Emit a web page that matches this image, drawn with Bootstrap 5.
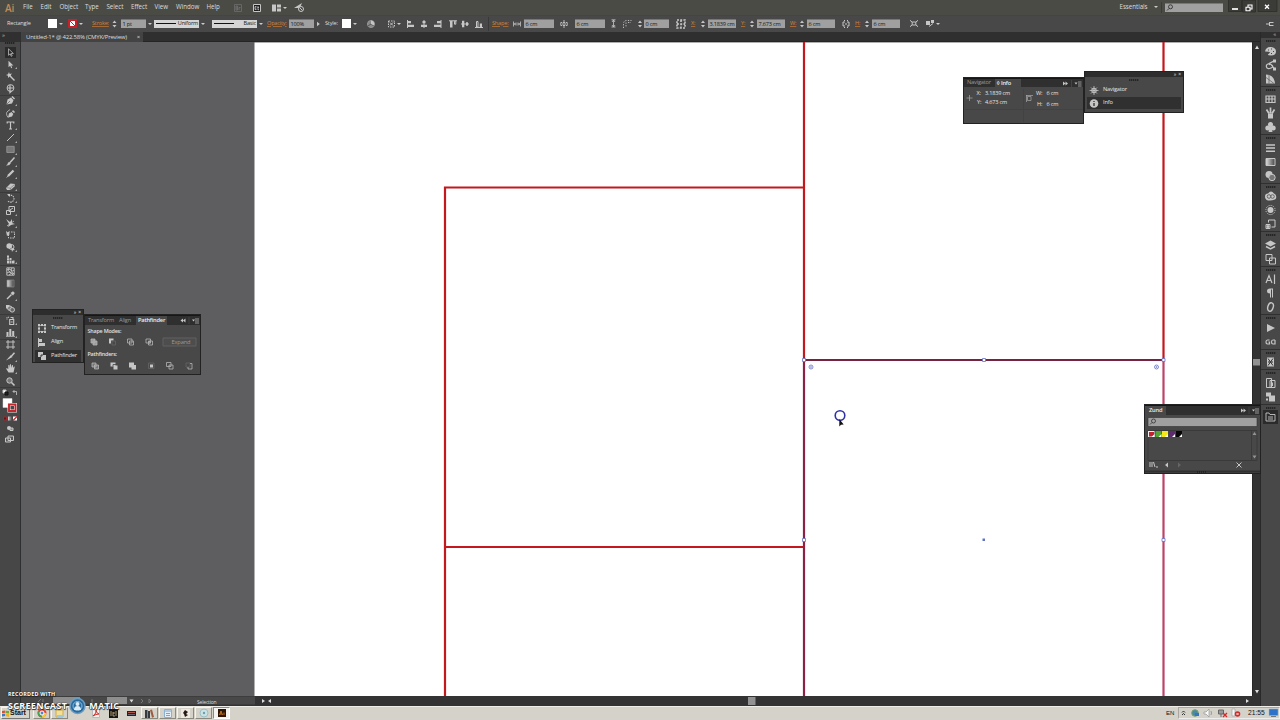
<!DOCTYPE html>
<html lang="en">
<head>
<meta charset="utf-8">
<title>Untitled-1</title>
<link href="https://cdn.jsdelivr.net/npm/bootstrap@5.3.0/dist/css/bootstrap.min.css" rel="stylesheet">
<style>
body{width:1280px;height:720px;overflow:hidden;background:#484848;color:#ddd;font:6px/1 "Open Sans","Noto Sans",sans-serif;letter-spacing:-.2px}
svg{display:block;overflow:visible;fill:none;stroke:#c6c6c6;stroke-width:1}
svg .f{fill:#c6c6c6;stroke:none}
.menubar{height:15px;background:#4b4b46;display:grid;align-items:center;grid-template-columns:18px 17.5px 19px 25.5px 21.5px 24.5px 23.5px 21.5px 30.5px 27px 19px 19px 22px 826px 41px 4px 65px 15px 18px 14px;padding-left:5px;font-size:6.2px;white-space:nowrap;flex:none;letter-spacing:-.03px}
.logo-ai{font-size:10px;color:#c58a55;font-weight:600}
.optbar{height:17px;background:#484848;border-top:1px solid #444;display:grid;align-items:center;padding-left:7px;padding-bottom:1px;white-space:nowrap;flex:none;font-size:5.6px;
grid-template-columns:41px 20px 24px 20px 42px 58px 55px 22px 36px 17px 25px 21px 19px 13px 14px 15px 12px 14px 13px 4px 21px 11px 36px 15px 36px 12px 15px 6px 32px 15px 9px 41px 8px 41px 9px 43px 13px 9px 46px 16px 340px 14px}
.lnk{color:#d58435;text-decoration:underline;text-decoration-color:#a46a36}
.fld{background:#a0a0a0;color:#161616;height:9px;line-height:8px;padding-left:1.5px;width:30px;border-top:1px solid #777;font-size:5.6px}
.search-fld{width:58px;height:8.5px}
.w25{width:25px}.w28{width:28px;margin-left:3px}
.dd::after{content:"";width:0;height:0;border:2px solid transparent;border-top:2.8px solid #ccc;border-bottom:0;margin-left:2px}
.sw{width:9px;height:9px;background:#fff}
.swr{border:2px solid #c62029;background:linear-gradient(45deg,#fff 42%,#c62029 43% 57%,#fff 58%)}
.spin{width:5px;flex:none}
.brush{width:45px;height:8px;background:#d4d4d4;color:#222;display:flex;align-items:center;font-size:5.6px;padding:0 1px 0 2px}
.brush::before{content:"";width:20px;border-top:1px solid #111;margin-right:auto}
.tabs{height:10px;background:#2f2f2f;flex:none;border-bottom:1px solid #252525}
.doctab{width:122px;height:10px;background:#434343;color:#ddd;padding-left:5px;font-size:6px;letter-spacing:-.22px;white-space:nowrap}
.doctab span{margin-left:auto;margin-right:3px}
.toolbox{width:21px;background:#484748;border-right:1.5px solid #2e2f30;flex:none}
.toolhead{height:9.5px;background:#303030;color:#bbb;font-size:6px;line-height:6px;padding-left:2px}
.dock .toolhead{height:5px;line-height:4px}
.grip{width:10px;height:2px;background:repeating-linear-gradient(90deg,#252525 0 1px,#3a3a3a 1px 2px);margin:0 auto}
.toolbox .grip{margin-bottom:2.5px}
.tool{height:12.2px;width:20px;display:flex;align-items:center;justify-content:center;position:relative}
.tool.sel svg{background:#2b2b2b;outline:1.5px solid #2b2b2b}
.tool.more::after{content:"";position:absolute;right:3px;bottom:1px;border:1px solid transparent;border-right-color:#aaa;border-bottom-color:#aaa}
.cut{box-shadow:inset 0 1px #3a3a3a}
.work{min-height:0;min-width:0}
.canvas{background:#5e5e60;flex:1 1 0;min-height:0}
.canvas>svg{overflow:hidden}
.vscroll{width:9px;background:#333;flex:none;border-left:1px solid #282828}
.statusrow{height:9.5px;background:#333;flex:none;font-size:5.7px;color:#ccc}
.dock{width:20px;background:#484848;border-left:1px solid #292929;flex:none}
.dgroup{border-top:1px solid #303030;padding-top:2px;position:relative}
.dgroup .grip{margin-bottom:1.5px}
.dgroup>svg{margin:0 auto;height:14px;width:11px;padding:1.5px 0}
.pnl{position:absolute;background:#484848;border:1px solid #222;font-size:5.7px;white-space:nowrap;color:#e4e4e4;z-index:3}
.p-info{left:963px;top:77px;width:121px;height:47px}
.p-nav{left:1084px;top:71px;width:100px;height:42px}
.p-tools{left:32px;top:309px;width:52px;height:54px}
.p-path{left:84px;top:314px;width:117px;height:61px}
.p-zund{left:1144px;top:404px;width:117px;height:70px}
.phead{background:#2d2d2d;height:5px;font-size:5px;line-height:4px;text-align:right;padding-right:2px}
.pnl .grip{margin-top:2px;margin-bottom:2.2px}
.ptabs{background:#2f2f2f;border-top:1px solid #171717;height:10px;color:#999;display:flex;align-items:center}
.ptabs b{background:#484848;color:#eee;font-weight:600;height:9px;line-height:8px;padding:0 2px}
.ptabs span{padding-left:3px}
.p-info .ptabs{height:9px}.p-info .ptabs b{height:8px;width:26px;padding-left:1.5px}
.t31{width:31px}.t21{width:20px}
.prow{height:14px;display:flex;align-items:center}
.prow.on{background:#303030;height:12px;margin:1px 2px}
.prow.on svg{margin-left:2px!important}
.p-nav .prow.on{margin-top:0}
.taskbar{height:14.5px;background:#d5d2c9;border-top:1px solid #f0eee8;flex:none;color:#111;display:grid;grid-template-columns:31px 2px 18px 18px 18px 18px 18px 18px 18px 18px 18px 18px 1fr 12px 102px;align-items:center;font-family:"Liberation Sans",sans-serif;letter-spacing:0}
.tbtn{width:17px;height:12px;display:flex;align-items:center;justify-content:center;border:1px solid #f6f4ee;border-right-color:#8b8880;border-bottom-color:#8b8880}
.flat{border-color:transparent}
.tbtn.active-app{background:#f5f3ef;border-color:#8b8880 #fff #fff #8b8880}
.startbtn{width:29px;height:12px;border:1px solid #f6f4ee;border-right-color:#777;border-bottom-color:#777;font:bold 7px/10px "Liberation Sans",sans-serif;margin-left:1px;gap:1px}
.tray{width:102px;height:12px;border:1px solid #aaa7a0;border-right-color:#eee;border-bottom-color:#eee;padding-left:2px}
.clock{font-size:6.7px;margin-left:-3px}
.wmark{position:absolute;left:8px;top:690.5px;z-index:9;color:#fff;font-family:"Open Sans",sans-serif;font-weight:700;text-shadow:.7px .7px 1px #222,-.5px 0 1px #333,0 0 1px #222;white-space:nowrap;line-height:1}
.wm1{font-size:5.4px;line-height:7px;letter-spacing:.22px}
.wm2{font-size:9px;letter-spacing:.3px;height:16px}
.wm2 svg{margin:0 3px 0 2px}
</style>
<script src="https://cdn.jsdelivr.net/npm/bootstrap@5.3.0/dist/js/bootstrap.bundle.min.js"></script>
</head>
<body class="d-flex flex-column position-relative">
<nav class="menubar">
 <span class="logo-ai">Ai</span><span>File</span><span>Edit</span><span>Object</span><span>Type</span><span>Select</span><span>Effect</span><span>View</span><span>Window</span><span>Help</span>
 <svg width="8" height="8"><path d="M.5.5h7v7h-7z" stroke="#666"/><path d="M2 2v4h1.500v-4H2M2 4h1.500M5 6V3.500h1.500" stroke="#6c6c6c"/></svg>
 <svg width="8" height="8"><path d="M.5.5h7v7h-7z" fill="#1c1c1c"/><path d="M3.500 2.500H2v3h1.500M2 4h1.500M5 2v4M4.500 3.500h1.500M5 5.700h1" stroke-width=".8"/></svg>
 <div class="dd d-flex align-items-center"><svg width="9" height="8"><path class="f" d="M0 .5h4v7H0zM5 .5h4v3H5zM5 4.500h4v3H5z"/></svg></div>
 <svg width="10" height="9"><path class="f" d="M0 5 8 0 5 7 4 5z"/><circle cx="7" cy="6" r="2.500" fill="#4b4b46"/><path d="M5.500 4.500l3 3"/></svg>
 <div class="dd d-flex align-items-center gap-1">Essentials</div>
 <svg width="1" height="11"><path d="M.5 0v11" stroke="#3a3a37"/></svg>
 <div class="fld search-fld"><svg width="8" height="7"><g stroke="#333" stroke-width=".9"><circle cx="4.500" cy="2.800" r="2"/><path d="M3 4.500 1 6.500"/></g></svg></div>
 <svg width="10" height="9"><path d="M-1.500-4h13V8.500h-13z" fill="#3b3b38" stroke="#2c2c2a" stroke-width=".8"/><path d="M2 6h6" stroke="#fff" stroke-width="1.700"/></svg>
 <svg width="8" height="8"><path d="M-2.500-4h13V8h-13z" fill="#3b3b38" stroke="#2c2c2a" stroke-width=".8"/><path d="M3 3V1h4v4H5.500M1 3.200h4v3.500H1z" stroke="#fff" stroke-width="1.100"/></svg>
 <svg width="8" height="7"><path d="M-5-4.500h19V7.500H-5z" fill="#3b3b38" stroke="#2c2c2a" stroke-width=".8"/><path d="M2 .7l4 4M6 .7l-4 4" stroke="#fff" stroke-width="1.300"/></svg>
</nav>
<div class="optbar">
 <span>Rectangle</span>
 <div class="dd d-flex align-items-center"><i class="sw"></i></div>
 <div class="dd d-flex align-items-center"><i class="sw swr"></i></div>
 <span class="lnk">Stroke:</span>
 <div class="d-flex align-items-center dd"><svg class="spin me-1" height="8"><path class="f" d="M.5 3 2.500.5 4.500 3zM.5 5 2.500 7.500 4.500 5z"/></svg><span class="fld w25">1 pt</span></div>
 <div class="dd d-flex align-items-center"><span class="brush">Uniform</span></div>
 <div class="dd d-flex align-items-center"><span class="brush">Basic</span></div>
 <span class="lnk">Opacity:</span>
 <div class="d-flex align-items-center"><span class="fld w25">100%</span><svg width="6" height="6"><path class="f" d="M3 .8 5.800 3 3 5.200z"/></svg></div>
 <span>Style:</span>
 <div class="dd d-flex align-items-center"><i class="sw"></i></div>
 <svg width="8" height="8"><circle cx="4" cy="4" r="3.500" fill="#888" stroke="#999"/><path d="M4 4l3 2M4 4 1 6" stroke="#555"/><path class="f" d="M4 4V.5Q8 1 7 5.500z"/></svg>
 <div class="dd d-flex align-items-center"><svg width="7" height="8"><path d="M.5 1h6v6h-6z" stroke-dasharray="1.500 1"/><path d="M2 2.500l3 3M5 2.500l-3 3"/></svg></div>
 <svg width="8" height="8"><path d="M.5 0v8"/><path class="f" d="M1 1h3v2.300H1zM1 4.700h6V7H1z"/></svg>
 <svg width="8" height="8"><path d="M4 0v8"/><path class="f" d="M2.500 1h3v2.300h-3zM1 4.700h6V7H1z"/></svg>
 <svg width="8" height="8"><path d="M7 0v8"/><path class="f" d="M3 1h4v2.300H3zM0 4.700h7V7H0z"/></svg>
 <svg width="8" height="8"><path d="M0 .8h8M5.500 1.200h1.300v3H5.500z"/><path class="f" d="M1 1h2.500v6.500H1z"/></svg>
 <svg width="8" height="8"><path d="M0 4h8"/><path class="f" d="M1 .7h2.300v6.600H1zM5 2.200h2v3.600H5z"/></svg>
 <svg width="8" height="8"><path d="M0 7.500h8M1.500 1.500h1.500v5.500H1.500z"/><path class="f" d="M4.800 3.500h2.200V7H4.800z"/></svg>
 <svg width="1" height="14"><path d="M.5 0v14" stroke="#383838"/></svg>
 <span class="lnk">Shape:</span>
 <svg width="8" height="8"><path d="M.5 1.500v5M7.500 1.500v5M1 4h6M3 2.500 1.500 4 3 5.500M5 2.500 6.500 4 5 5.500" stroke-width=".8"/></svg>
 <span class="fld">6 cm</span>
 <svg width="8" height="8"><path d="M3 2.500h2v3H3zM2 2.500H.8v3H2M6 2.500h1.200v3H6M4 0v2M4 6v2" stroke-width=".9"/></svg>
 <span class="fld">6 cm</span>
 <svg width="6" height="9"><path d="M.5.8h4M.5 8h4M2.500 1v7M1 3l1.500-2L4 3M1 6l1.500 2L4 6" stroke-width=".8"/></svg>
 <svg width="9" height="8"><path d="M.5 8V4Q.5.500 4 .5h4.500M3 2.500v5M5 2.500h3" stroke-dasharray="1.300 1.300" stroke-width=".9"/></svg>
 <svg class="spin" height="8"><path class="f" d="M0 3 2 .5 4 3zM0 5 2 7.500 4 5z"/></svg>
 <span class="fld w25">0 cm</span>
 <svg width="10" height="10"><path d="M1 1h8v8H1zM5 1v8M1 5h8" stroke-dasharray="2 1.200" stroke-width="1.600"/></svg>
 <span class="lnk">X:</span>
 <div class="d-flex align-items-center"><svg class="spin" height="8"><path class="f" d="M1 3 3 .5 5 3zM1 5 3 7.500 5 5z"/></svg><span class="fld w28">3.1839 cm</span></div>
 <span class="lnk">Y:</span>
 <div class="d-flex align-items-center"><svg class="spin" height="8"><path class="f" d="M1 3 3 .5 5 3zM1 5 3 7.500 5 5z"/></svg><span class="fld w28">7.673 cm</span></div>
 <span class="lnk">W:</span>
 <div class="d-flex align-items-center"><svg class="spin" height="8"><path class="f" d="M1 3 3 .5 5 3zM1 5 3 7.500 5 5z"/></svg><span class="fld w28">6 cm</span></div>
 <svg width="8" height="8"><path d="M3 2H1v4h2M5 2h2v4H5M3 4h2M2.500 0v1M5.500 0v1M2.500 7v1M5.500 7v1"/></svg>
 <span class="lnk">H:</span>
 <div class="d-flex align-items-center"><svg class="spin" height="8"><path class="f" d="M1 3 3 .5 5 3zM1 5 3 7.500 5 5z"/></svg><span class="fld w28">6 cm</span></div>
 <svg width="8" height="7"><path d="M2.200 2h3.600v3H2.200zM0 .3 2 2M8 .3 6 2M0 6.700 2 5M8 6.700 6 5"/></svg>
 <div class="dd d-flex align-items-center"><svg width="8" height="7"><path class="f" d="M0 1h4v4H0zM5 0h3v3H5z"/><path d="M3 6.500 7 3.500"/></svg></div>
 <svg width="8" height="6"><path d="M0 3h3M3.500 1v4M4 1.500h3.500M4 4.500h3.500"/></svg>
</div>
<main class="d-flex flex-grow-1 work">
 <aside class="toolbox">
  <div class="toolhead">»</div>
  <div class="grip"></div>
  <div class="tool sel"><svg width="9" height="9"><path d="M2.500.8v6.500l1.700-1.500 1 2.500 1-.5-1-2.300h2.200z" stroke="#bbb" stroke-width=".8"/></svg></div>
  <div class="tool more"><svg width="9" height="9"><path class="f" d="M2.500.8v6.500l1.700-1.500 1 2.500 1-.5-1-2.300h2.200z"/></svg></div>
  <div class="tool"><svg width="9" height="9"><path d="M4 4l4.500 4.500" stroke-width="1.400"/><path class="f" d="M3 0l.7 2L6 1.500 4.700 3.300 5.500 5 3.500 4.500 2 6 2 3.800 0 3l2-.8z"/></svg></div>
  <div class="tool"><svg width="9" height="9"><circle cx="4.500" cy="4" r="3.400"/><path d="M1.500 4h6M4 1v7.500l1.500-1.500" stroke-width="1.200"/></svg></div>
  <div class="tool more cut"><svg width="9" height="9"><path class="f" d="M.5 8.500 1.500 3.500 5 1.500 7.500 4.300 6 7.500zM5.500 1 6.500 0l2.500 2.500-1 1z"/><path d="M.5 8.500 4 5" stroke="#484848" stroke-width=".6"/></svg></div>
  <div class="tool"><svg width="9" height="9"><path class="f" d="M2 8.500 3 4.500 5.500 3 7.300 5 6 7.500zM6 2.500 7 1l2 2-1 1z"/><path d="M2 8.500Q-1 4 2 2T4 .5" stroke-width=".8"/></svg></div>
  <div class="tool more"><svg width="9" height="9"><path d="M1.200 2.500V1h6.600v1.500M4.500 1v7M3 8h3" stroke-width="1.200"/></svg></div>
  <div class="tool more"><svg width="9" height="9"><path d="M1 8 8 1"/></svg></div>
  <div class="tool more"><svg width="9" height="9"><path d="M.8 1.300h7.400v6.200H.8z" fill="#777" stroke="#999" stroke-width=".8"/></svg></div>
  <div class="tool more"><svg width="9" height="9"><path d="M8.500.5 4 5.500" stroke-width="1.500"/><path class="f" d="M0 8.500Q2 7.500 2 5.500L4 5l.7 1.500Q3.500 9 0 8.500z"/></svg></div>
  <div class="tool more"><svg width="9" height="9"><path d="M2 7 7.500 1.500" stroke-width="2.300"/><path d="M.7 8.500 2.500 6.700"/></svg></div>
  <div class="tool more"><svg width="9" height="9"><path class="f" d="M0 6 4.500 1.500 9 2 8.500 4.500 4.500 8H1z"/><path d="M1 5.700l3.300.5L8.500 2.500M4.300 6v2" stroke="#666" stroke-width=".6"/></svg></div>
  <div class="tool more cut"><svg width="9" height="9"><path d="M2.500 1.700A3.500 3.500 0 1 1 1.500 6.500" stroke-dasharray="1.500 .8" stroke-width="1.100"/><path class="f" d="M1 0h3v3z"/></svg></div>
  <div class="tool more"><svg width="9" height="9"><path d="M3 .5h5.500v5H3zM.5 4.500h4v4h-4z"/><path d="M4 4 7 2"/></svg></div>
  <div class="tool more"><svg width="9" height="9"><path class="f" d="M0 1l4 3L6 1v4l3 1-4 1-3 2 1-3z"/><path d="M1 8 8 3" stroke-width=".8"/></svg></div>
  <div class="tool"><svg width="9" height="9"><path d="M2.500 2h6v6h-6z" stroke-dasharray="1.500 1"/><path class="f" d="M0 1l4 3-3 2z"/></svg></div>
  <div class="tool more"><svg width="9" height="9"><circle class="f" cx="3.200" cy="3" r="2.800"/><circle cx="5.500" cy="4" r="2.500"/><path class="f" d="M5 4l4 3-2 .2L6 9z"/></svg></div>
  <div class="tool more"><svg width="9" height="9"><path class="f" d="M1 .5h2v8H1zM3.500 3h2v5.500h-2zM6 5.500h2.500v3H6z"/><path d="M1 3h3M1 5.500h6" stroke="#555" stroke-width=".6"/></svg></div>
  <div class="tool cut"><svg width="9" height="9"><path d="M.8.8h7.400v7.400H.8zM.8 3Q3 1 5 3t3 0M1 6q2-2 4 0t3 0M3 1Q1 4 4 5T3 8M6 1q-2 2 0 4t0 3" stroke-width=".9"/></svg></div>
  <div class="tool"><svg width="9" height="9"><defs><linearGradient id="gr"><stop stop-color="#ddd"/><stop offset="1" stop-color="#444"/></linearGradient></defs><path d="M1 1h7v7H1z" fill="url(#gr)" stroke="#888" stroke-width=".7"/></svg></div>
  <div class="tool more"><svg width="9" height="9"><path d="M1 8 5.500 3.500" stroke-width="1.400"/><path class="f" d="M4.500 2 7 .2 8.800 2 7 4.500z"/></svg></div>
  <div class="tool"><svg width="9" height="9"><path class="f" d="M0 1h3.500v3.500H0z"/><circle cx="3.800" cy="4.200" r="2.200" fill="#777"/><circle cx="6.200" cy="5.800" r="2.300" fill="#666"/></svg></div>
  <div class="tool more cut"><svg width="9" height="9"><path d="M3.700 3.500h4v5h-4zM4.500 1.500h2.500v2M1 1v.8M2.500.8v1M.5 3h1M4.800 6h1.800" stroke-width="1.100"/></svg></div>
  <div class="tool more"><svg width="9" height="9"><path class="f" d="M.5 4h2v4h-2zM3.300 1h2v7h-2zM6.200 3h2v5h-2z"/><path d="M0 8.500h9" stroke-width=".7"/></svg></div>
  <div class="tool cut"><svg width="9" height="9"><path d="M2 0v9M7 0v9M0 2h9M0 7h9" stroke-width=".9"/></svg></div>
  <div class="tool more"><svg width="9" height="9"><path class="f" d="M0 8.500 5 3l1.500 2z"/><path d="M5.500 4 8.500.8" stroke-width="1.500"/></svg></div>
  <div class="tool more"><svg width="9" height="9"><path class="f" d="M2.500 8.500 0 4.500l1-.3L2.300 5V1h1v3L4 .2h1V4l1-3 1 .2V4l1-1.500.8.300L7.500 8.500z"/></svg></div>
  <div class="tool"><svg width="9" height="9"><circle cx="3.500" cy="3.500" r="2.700" fill="#777"/><path d="M5.500 5.500l3 3" stroke-width="1.600"/></svg></div>
  <svg width="20" height="60" viewBox="0 0 20 60"><path d="M0 .5h20" stroke="#3a3a3a"/><path d="M3 3h3v3H3z" fill="#fff"/><path d="M5 5h3v3H5z" fill="#222" stroke="#111"/><path d="M13 4.500h3.500V8M14.500 3 13 4.500l1.500 1.500" stroke-width=".8"/>
   <path d="M3 11.500h9v9H3z" fill="#fff" stroke="#ddd" stroke-width=".5"/><path d="M9 17.500h6.500v6.500H9z" fill="#484848" stroke="#eee" stroke-width="3"/><path d="M9 17.500h6.500v6.500H9z" stroke="#c6242b" stroke-width="1.900"/>
   <path d="M3.500 30h3v3h-3z" stroke="#b21f24" fill="#571b1d"/><path d="M8 29.500h4v4H8z" fill="url(#gr)" stroke="none"/><path d="M13 29.500h4v4h-4z" fill="#fff" stroke="none"/><path d="M13 33.500l4-4" stroke="#c6242b" stroke-width="1.300"/>
   <circle cx="9" cy="41" r="2" class="f"/><path d="M10 41h3v2.500h-3z" fill="#888"/><path d="M5.500 51h5v4h-5zM8 49h5.500v4.500H8z" fill="#555"/></svg>
 </aside>
 <section class="d-flex flex-column flex-grow-1 work">
  <div class="tabs"><div class="doctab d-flex align-items-center">Untitled-1* @ 422.58% (CMYK/Preview)<span>×</span></div></div>
  <div class="d-flex flex-grow-1 work">
   <div class="canvas">
    <svg width="1231" height="654" viewBox="21 42 1231 654">
     <path d="M254.500 42.500H1252V696H254.500z" fill="#fff" stroke="none"/>
     <g stroke="#c4181f" stroke-width="2.200"><path d="M804 42v318M1163.500 42v318M445 696V187.500h359M445 547h359"/></g>
     <path d="M804 360v336" stroke="#8d2145" stroke-width="2.200"/><path d="M1163.500 360v336" stroke="#bd4468" stroke-width="2.200"/><path d="M804 360h359.500" stroke="#742343" stroke-width="2"/>
     <g fill="#fff" stroke="#6370c4" stroke-width=".8"><path d="M802.500 358.500h3v3h-3zM1162 358.500h3v3h-3zM982.500 358.500h3v3h-3zM802.500 538.500h3v3h-3zM1162 538.500h3v3h-3z"/><circle cx="811" cy="367" r="2"/><circle cx="1156.500" cy="367" r="2"/></g>
     <g fill="#6370c4" stroke="none"><circle cx="811" cy="367" r=".8"/><circle cx="1156.500" cy="367" r=".8"/><path d="M982.500 538.500h2.500v2.500h-2.500z"/></g>
     <circle cx="840" cy="415.500" r="4.800" stroke="#3030a8" stroke-width="1.600"/><path d="M839.300 419v7.500l1.700-1.700 2.700-.2z" fill="#111" stroke="none"/>
    </svg>
   </div>
   <div class="vscroll"><svg width="9" height="654"><path d="M2 7 4 3.500 6 7zM2 648h4l-2 3.500z" fill="#ddd" stroke="none"/><path d="M0 317h8v6.500H0z" fill="#929292" stroke="none"/></svg></div>
  </div>
  <div class="statusrow"><svg width="1239" height="9" viewBox="21 696 1239 9"><path d="M21 696.500h234v8H21z" fill="#484848" stroke="none"/><path d="M53 697h27v7H53zM107 697h20v7h-20z" fill="#8e8e8e" stroke="none"/><path d="M129.500 699.500h4l-2 3zM262 699l3 2-3 2zM271 699l-3 2 3 2zM1246 699l3 2-3 2z" fill="#ddd" stroke="none"/><path d="M38 702l3-3M43 699v3M92 699v4M141 699l2 2-2 2M149 699l2 2-2 2v-4" stroke="#777"/><path d="M748 697h7.500v8h-7.500z" fill="#929292" stroke="none"/><text x="197" y="703.500" fill="#ddd" stroke="none" textLength="19.500" lengthAdjust="spacingAndGlyphs">Selection</text></svg></div>
 </section>
 <aside class="dock">
  <div class="toolhead text-end pe-1">«</div>
  <div class="dgroup"><div class="grip"></div>
   <svg viewBox="0 0 11 11"><path class="f" d="M0 6Q1 1 6 1.500T11 6 6 10 4 8 0 6z"/><path d="M3 4.500h1M6 3.500h1M8 6h1M6 8h1" stroke="#444"/></svg>
   <svg viewBox="0 0 11 11"><path d="M10 1 4 4Q.7 5 1.500 7.500T6 8.500 6 5Q5 4 4 5.500M6 5l4 5" stroke-width="1.200"/><path class="f" d="M8 0h3v3H8zM8 8h3v3H8z"/></svg>
   <svg viewBox="0 0 11 11"><path class="f" d="M1 1Q9 1 10 10H1z"/><path d="M1 4l8 6M4 1.500V10" stroke="#666" stroke-width=".8"/></svg></div>
  <div class="dgroup"><div class="grip"></div>
   <svg viewBox="0 0 11 11"><path d="M1 2.500h9v6.500H1zM1 5.500h9M4 2.500V9M7 2.500V9" stroke-width="1.200"/></svg>
   <svg viewBox="0 0 11 11"><path class="f" d="M3 6h5v5H3z"/><path d="M4 6 1.500 2M5.500 6V0M7 6l2.500-4" stroke-width="1.700"/></svg>
   <svg viewBox="0 0 11 11"><circle class="f" cx="5.500" cy="3" r="2.500"/><circle class="f" cx="2.800" cy="6.500" r="2.500"/><circle class="f" cx="8.200" cy="6.500" r="2.500"/><path class="f" d="M5 5h1l1.500 5.500h-4z"/></svg></div>
  <div class="dgroup"><div class="grip"></div>
   <svg viewBox="0 0 11 11"><path d="M1 2.500h9M1 5.500h9M1 8.800h9" stroke-width="1.500"/></svg>
   <svg viewBox="0 0 11 11"><path d="M1 2h9v7H1z" fill="url(#gr)"/></svg>
   <svg viewBox="0 0 11 11"><circle class="f" cx="4" cy="4" r="3.500"/><circle cx="7" cy="7" r="3.200" fill="#777"/></svg></div>
  <div class="dgroup"><div class="grip"></div>
   <svg viewBox="0 0 11 11"><path class="f" d="M0 6Q0 3 3 3 6-1 9 3q3 1 2 5-1 2-8 2-3-1-3-4z"/><circle cx="4" cy="6" r="1.800" stroke="#666"/><circle cx="7.500" cy="6" r="1.800" stroke="#666"/></svg>
   <svg viewBox="0 0 11 11"><circle class="f" cx="5.500" cy="5.500" r="3"/><circle cx="5.500" cy="5.500" r="4.600" stroke-dasharray="1 1"/></svg>
   <svg viewBox="0 0 11 11"><path d="M3.500 4V1.500H10v7H6.500M1 6h4v4H1z"/><circle class="f" cx="3" cy="8" r="1.500"/></svg></div>
  <div class="dgroup"><div class="grip"></div>
   <svg viewBox="0 0 11 11"><path class="f" d="M0 4 5.500 1 11 4 5.500 7z"/><path d="M1 7l4.500 2.500L10 7" stroke-width="1.500"/></svg>
   <svg viewBox="0 0 11 11"><path d="M1 1h6v6H1zM4.500 4.500h6v6h-6z" fill="#484848"/></svg></div>
  <div class="dgroup"><div class="grip"></div>
   <svg viewBox="0 0 11 11"><path d="M1 9.500 4 2l3 7.500M2 7h4M9.500 1v9.500" stroke-width="1.200"/></svg>
   <svg viewBox="0 0 11 11"><path class="f" d="M8 1H5Q2 1 2 3.500T5 6v4h1V2h1v8h1z"/></svg>
   <svg viewBox="0 0 11 11"><ellipse cx="5.500" cy="5.500" rx="2.700" ry="4.300" transform="rotate(18 5.500 5.500)" stroke-width="1.400"/></svg></div>
  <div class="dgroup"><div class="grip"></div>
   <svg viewBox="0 0 11 11"><path class="f" d="M2 1.500 10 5.500 2 9.500z"/></svg>
   <svg viewBox="0 0 11 11"><path d="M4.500 3.500H2.500Q1 3.500 1 5.500t1.500 2h2V5.500H3.500M10 3.500H8Q6.500 3.500 6.500 5.500t1.500 2h2v-4" stroke-width="1.200"/></svg></div>
  <div class="dgroup"><div class="grip"></div>
   <svg viewBox="0 0 11 11"><path class="f" d="M2 1h7v9H2z"/><path d="M3 2l5 7M8 2 3 9M3 5.500h5" stroke="#333"/></svg></div>
  <div class="dgroup"><div class="grip"></div>
   <svg viewBox="0 0 11 11"><path d="M1.500 1h5v9h-5zM5 3h5v7H5z" fill="#484848"/><path d="M7.500 5v3.500"/></svg>
   <svg viewBox="0 0 11 11"><path class="f" d="M1 1h5v4H1zM4 4h6v6H4z"/><path d="M1 8h2" stroke-width="2"/></svg></div>
  <div class="dgroup"><div class="grip"></div>
   <svg viewBox="0 0 11 11"><path d="M-2-1.500h15v14H-2z" fill="#2b2b2b" stroke="none"/><path d="M1 9.500v-8h3l1 1.500h5v6.500zM3 5.500h5M3 7.500h5" stroke-width=".9"/></svg></div>
 </aside>
</main>
<footer class="taskbar">
 <div class="startbtn d-flex align-items-center"><svg width="7" height="7"><g stroke="none"><path d="M0 1 3 .5 2.800 3 0 3.300z" fill="#d8512c"/><path d="M3.500.7 7 1v2.500L3.500 3z" fill="#6da83b"/><path d="M0 4l3-.3V6L0 6.500z" fill="#3b78c4"/><path d="M3.500 3.700 7 4v3L3.500 6z" fill="#e5b42b"/></g></svg>Start</div><i></i>
 <div class="tbtn"><svg width="10" height="10"><g stroke="none"><circle cx="5" cy="5" r="4.500" fill="#dd4b3c"/><path d="M5 5 1 3A4.500 4.500 0 0 0 5 9.500z" fill="#4aa24f"/><path d="M5 5h4.500A4.500 4.500 0 0 1 5 9.500z" fill="#f1c644"/><circle cx="5" cy="5" r="2" fill="#4a85d9" stroke="#fff"/></g></svg></div>
 <div class="tbtn"><svg width="10" height="9"><path d="M1 1h7v7H1z" fill="#f3df96" stroke="#c6ac57"/><path d="M2 6h7v2H2z" fill="#9cc8e2" stroke="none"/></svg></div><i></i>
 <div class="tbtn flat"><svg width="8" height="10"><path d="M.5.500h7v9h-7z" fill="#f4f1ef" stroke="#bbb"/><path d="M1 8Q5 5 4 2 4 5 7 6 4 6 1 8" stroke="#c8302a"/></svg></div>
 <div class="tbtn flat"><svg width="9" height="9"><path d="M0 0h9v9H0z" fill="#151513" stroke="none"/><path d="M2 2v5M4 3v4h2M4 4h2M7 2v5" stroke="#d5bb87" stroke-width=".8"/></svg></div>
 <div class="tbtn flat"><svg width="9" height="7"><path d="M0 1h9v5H0z" fill="#252525" stroke="none"/><path d="M1 2.500h7" stroke="#b25748"/><path d="M1 4.500h7" stroke="#667"/></svg></div>
 <div class="tbtn"><svg width="9" height="9"><path d="M0 1h2.500v8H0zM3 2h2v7H3z" fill="#363b41" stroke="none"/><path d="M5 1l2-.5L9 8l-2 .7z" fill="#9b5e45" stroke="none"/></svg></div>
 <div class="tbtn"><svg width="8" height="9"><path d="M.5.500h7v8h-7z" fill="#e5eef6" stroke="#8eb0d0"/><path d="M1 2h6M2 4.500h4M2 6.500h4" stroke="#7ca3c9"/></svg></div>
 <div class="tbtn"><svg width="9" height="9"><path d="M0 0h9v9H0z" fill="#eee9df" stroke="none"/><path d="M4 1l3 2-2 2 2 1-3 2-1-3-1-1z" fill="#251716" stroke="none"/></svg></div>
 <div class="tbtn"><svg width="10" height="10"><circle cx="5" cy="5" r="4" fill="#cce3e5" stroke="#9bc1c7"/><circle cx="5" cy="5" r="1.200" fill="#6d9eaf" stroke="none"/></svg></div>
 <div class="tbtn active-app"><svg width="8" height="8"><path d="M0 0h8v8H0z" fill="#2b1404" stroke="none"/><path d="M1.500 6 3 2l1.500 4M2 5h2M6 3.500V6" stroke="#e18521" stroke-width=".8"/></svg></div>
 <span>EN</span>
 <div class="d-flex align-items-center tray">
  <svg width="70" height="11" viewBox="1181 708 70 11"><path d="M1182 712.500l1.500-1.500 1.500 1.500M1182 715l1.500-1.500 1.500 1.500" stroke="#222" stroke-width=".9"/><circle cx="1195" cy="713" r="3.300" fill="#4b87a8" stroke="#7ba36d"/><path d="M1195 713h4v3h-4z" fill="#3775bd" stroke="none"/><path d="M1204 712h2l3-3v8l-3-3h-2z" fill="#f9f9f9" stroke="#888" stroke-width=".6"/><path d="M1211 711q1 2 0 4" stroke="#999"/><path d="M1218.500 710h5v4h-5zM1221 714v3" fill="#999" stroke="#666"/><path d="M1223 713l4 4M1227 713l-4 4" stroke="#d52828" stroke-width="1.300"/><path d="M1232 709h3v7h-3z" fill="#f6f6f6" stroke="#999" stroke-width=".6"/><circle cx="1237.500" cy="714" r="2.800" fill="#cf2d2d" stroke="none"/><path d="M1236.500 713l2 2M1238.500 713l-2 2" stroke="#fff" stroke-width=".8"/></svg>
  <span class="clock">21:55</span><svg class="ms-1" width="9" height="8"><path d="M0 0h9v6.500H0z" fill="#2e71c9" stroke="#8cb4e0" stroke-width=".5"/><path d="M2 7.500h5" stroke="#777"/></svg></div>
</footer>

<div class="pnl p-info">
 <div class="ptabs"><span class="t31">Navigator</span><b>◊ Info</b><svg class="ms-auto" width="20" height="7"><path class="f" d="M0 1.500 2.500 3.500 0 5.500zM2.500 1.500 5 3.500 2.500 5.500zM11.500 2.500h3l-1.500 2z"/><path d="M8.500 0v7" stroke="#444"/><path d="M15 2h3.500M15 4h3.500M15 6h3.500" stroke-width=".7"/></svg></div>
 <svg width="119" height="36" viewBox="964 87 119 36"><path d="M966.500 98h6M969.500 95v6M1027.500 96.500h3.500v4h-3.500zM1026 95.500h7M1026.500 95v7" stroke-width=".7" stroke="#aaa"/><path d="M1023.500 89v33M965 109.500h118" stroke="#424242"/><g stroke="none" fill="#e5e5e5" font-size="5.600"><text x="976.500" y="95">X:</text><text x="985" y="95">3.1839 cm</text><text x="977" y="103.500">Y:</text><text x="985" y="103.500">4.673 cm</text><text x="1036" y="95">W:</text><text x="1046.500" y="95">6 cm</text><text x="1037" y="105.500">H:</text><text x="1046.500" y="105.500">6 cm</text></g></svg>
</div>
<div class="pnl p-nav">
 <div class="phead">» &nbsp;×</div><div class="grip"></div>
 <div class="prow ps-1"><svg width="10" height="9"><circle cx="5" cy="4.500" r="2.300"/><path d="M5 0v9M.5 4.500h9M2 1.500l6 6M8 1.500l-6 6" stroke-width=".8"/></svg><span class="ps-1">Navigator</span></div>
 <div class="prow on"><svg width="10" height="9"><circle class="f" cx="5" cy="4.500" r="4.300"/><path d="M5 4v3M5 2v1" stroke="#333" stroke-width="1.300"/></svg><span class="ps-1">Info</span></div>
</div>
<div class="pnl p-tools">
 <div class="phead">» &nbsp;×</div><div class="grip"></div>
 <div class="prow"><svg class="ms-1" width="10" height="9"><path d="M2 1.500h6v6H2z" stroke-width=".7"/><path class="f" d="M1 0h2v2H1zM4 0h2v2H4zM7 0h2v2H7zM1 3.500h2v2H1zM7 3.500h2v2H7zM1 7h2v2H1zM4 7h2v2H4zM7 7h2v2H7z"/></svg><span class="ms-1">Transform</span></div>
 <div class="prow"><svg class="ms-1" width="10" height="9"><path d="M1.500 0v9"/><path class="f" d="M2 1h3v3H2zM2 5h6v3H2z"/></svg><span class="ms-1">Align</span></div>
 <div class="prow on"><svg width="10" height="9"><path class="f" d="M1 0h5v5H1zM4 3h5v5H4z"/><path d="M4 5V3h2" stroke="#333"/></svg><span class="ms-1">Pathfinder</span></div>
</div>
<div class="pnl p-path">
 <div class="ptabs"><span class="t31">Transform</span><span class="t21">Align</span><b>Pathfinder</b><svg class="ms-auto" width="20" height="7"><path class="f" d="M3 1.500.5 3.500 3 5.500zM5.500 1.500 3 3.500 5.500 5.500zM12 2.500h3l-1.500 2z"/><path d="M9 0v7" stroke="#444"/><path d="M15 2h4M15 4h4M15 6h4" stroke-width=".7"/></svg></div>
 <svg width="115" height="49" viewBox="85 325 115 49"><g stroke="none" fill="#e0e0e0" font-weight="600" font-size="5.400"><text x="87.500" y="332.500">Shape Modes:</text><text x="87.500" y="355.500">Pathfinders:</text></g><path d="M163 338h33v8h-33z" fill="#4d4d4d" stroke="#606060"/><text x="171.500" y="344" fill="#999" stroke="none" font-size="5.800">Expand</text>
 <g stroke="#b5b5b5" stroke-width=".8"><path d="M91 339h4v4h-4zM93 341h4v4h-4z" fill="#999"/><path class="f" d="M109 338.500h4.500v2h-2.500v3h-2z"/><path d="M112 341h3.500v4H112z" stroke="#666"/><path d="M127.500 339h4.500v4h-4.500zM129.500 341h4v4h-4z"/><path d="M146 339h4.500v4H146zM148.500 341h4v4h-4z"/><path d="M149 341.500h1.500v1.500H149z" fill="#666"/>
 <path d="M92 363h4v4h-4zM94.500 365h4v4h-4z" fill="#777"/><path class="f" d="M110.500 362.500h5v4h-5zM113.500 365.500h4v4h-4zM129 362.500h5v5h-5zM131.500 365h4.500v4.500h-4.500z"/><path d="M113 366.500v-2h3" stroke="#444"/><path d="M148.500 363h5.500v5.500h-5.500z" stroke="#666"/><path class="f" d="M150 364.500h3v3h-3z"/><path d="M166.500 362.500h4.500v4h-4.500zM169 365h4v4h-4z"/><path d="M186 363h4v4h-4z" stroke="#666"/><path d="M190 363.500h2v5.500h-4v-2"/></g></svg>
</div>
<div class="pnl p-zund">
 <div class="ptabs"><b class="px-1">Zund</b><svg class="ms-auto" width="20" height="7"><path class="f" d="M1 1.500 3.500 3.500 1 5.500zM3.500 1.500 6 3.500 3.500 5.500zM12 2.500h3l-1.500 2z"/><path d="M9 0v7" stroke="#444"/><path d="M15 2h4M15 4h4M15 6h4" stroke-width=".7"/></svg></div>
 <svg width="115" height="58" viewBox="1145 415 115 58"><path d="M1148 417.500h109v9h-109z" fill="#a0a0a0" stroke="#303030" stroke-width=".6"/><g stroke="#333" stroke-width=".8"><circle cx="1153.500" cy="421" r="2"/><path d="M1152 422.500l-2 2"/></g><path d="M1148 430.500h109v30h-109zM1251.500 430v30" stroke="#3a3a3a"/><path class="f" d="M1252.500 435h4l-2-3zM1252.500 455.500h4l-2 3z" opacity=".6"/>
 <g stroke="none"><path d="M1148 431h6.500v6h-6.500z" fill="#eee"/><path d="M1149 432h5v4.500h-5z" fill="#c5202c"/><path d="M1155.500 431h6v6h-6z" fill="#55a532"/><path d="M1162 431h6v6h-6z" fill="#f6e71b"/><path d="M1169 431h6v6h-6z" fill="#5d2b70"/><path d="M1176 431h6v6h-6z" fill="#060606"/><path d="M1154.500 434v3h-3zM1161.500 434v3h-3zM1168 434v3h-3zM1175 434v3h-3zM1182 434v3h-3z" fill="#fff"/></g>
 <path d="M1150 462v5M1152 462v5M1153.500 462l1.500 5M1156 467h2M1236.500 462.500l5 5M1241.500 462.500l-5 5"/><path class="f" d="M1168 462.500v5l-3-2.500z"/><path d="M1178 462.500v5l3-2.500z" fill="#666" stroke="none"/><path d="M1145 471.500h115" stroke="#303030" stroke-width="2"/><path d="M1197 472h10" stroke="#111" stroke-dasharray="1 1"/></svg>
</div>
<div class="wmark"><div class="wm1">RECORDED WITH</div><div class="wm2 d-flex align-items-center"><span>SCREENCAST</span><svg width="17" height="18"><circle cx="8.500" cy="9" r="7.500" fill="#286b9f" stroke="#6d9ec2" stroke-width="1.500"/><circle cx="8.500" cy="9" r="4.500" stroke="#91bddb"/><circle cx="8.500" cy="7" r="2" fill="#d9ebf5" stroke="none"/><path d="M5 13q0-4 3.500-4t3.500 4z" fill="#d9ebf5" stroke="none"/></svg><span>MATIC</span></div></div>
</body>
</html>
